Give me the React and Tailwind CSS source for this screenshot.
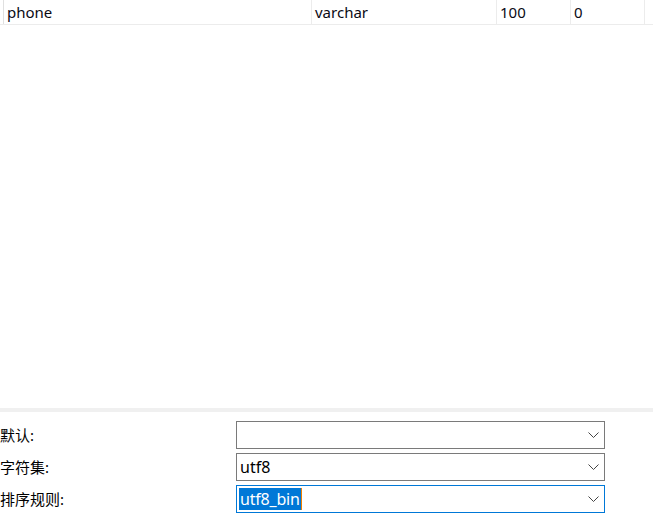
import React from "react";

const Chevron = () => (
  <svg width="11" height="6" viewBox="0 0 11 6" className="shrink-0">
    <path d="M0.5 0.5 L5.5 5.5 L10.5 0.5" fill="none" stroke="#444" strokeWidth="1" />
  </svg>
);

const Field = ({ label, value, focused }) => (
  <div className="flex items-center h-[28px]">
    <div className="w-[236px] text-[15px] text-black">{label}</div>
    <div
      className={
        "w-[369px] h-[28px] flex items-center justify-between pl-[2px] pr-[5px] border " +
        (focused ? "border-[#0078d7]" : "border-[#7a7a7a]")
      }
    >
      {focused ? (
        <span className="flex items-center">
          <span className="bg-[#0078d7] text-white text-[16px] leading-[22px] px-[1px] tracking-[-0.2px]">{value}</span>
          <span className="w-[1px] h-[22px] bg-[#f08000]" />
        </span>
      ) : (
        <span className="text-[16px] text-black px-[1px]">{value}</span>
      )}
      <Chevron />
    </div>
  </div>
);

export default function App() {
  const cells = [
    { w: "w-[308px]", text: "phone" },
    { w: "w-[185px]", text: "varchar" },
    { w: "w-[74px]", text: "100" },
    { w: "w-[74px]", text: "0" },
  ];

  return (
    <div
      className="w-[653px] h-[515px] bg-white flex flex-col overflow-hidden"
      style={{ fontFamily: '"Noto Sans", "Noto Sans CJK SC", sans-serif' }}
    >
      <div className="flex h-[25px] border-b border-[#ececec] pl-[3px]">
        <div className="w-[1px] bg-[#e0e0e0]" />
        {cells.map((c, i) => (
          <div
            key={i}
            className={c.w + " border-r border-[#ececec] pl-[3px] text-[15px] leading-[25px] text-[#0a0a14]"}
          >
            {c.text}
          </div>
        ))}
      </div>

      <div className="flex-1" />

      <div className="h-[4px] bg-[#f0f0f0]" />

      <div className="flex flex-col gap-[4px] pt-[9px] pb-[2px]">
        <Field label="默认:" value="" />
        <Field label="字符集:" value="utf8" />
        <Field label="排序规则:" value="utf8_bin" focused />
      </div>
    </div>
  );
}
